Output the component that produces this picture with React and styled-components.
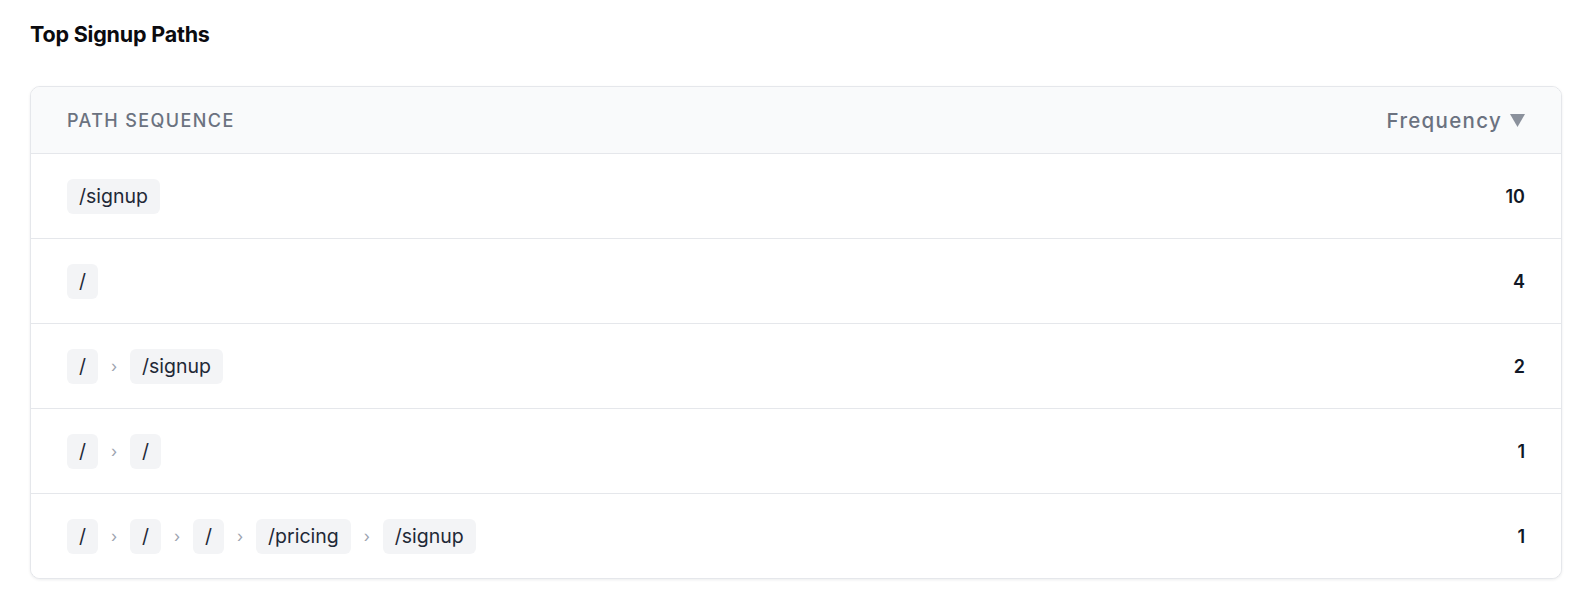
import React from 'react';
import styled, { createGlobalStyle } from 'styled-components';

const GlobalStyle = createGlobalStyle`
    html, body {
        margin: 0;
        padding: 0;
        background: #ffffff;
        font-family: Inter, "Liberation Sans", sans-serif;
        color: #111827;
    }
`;

const Page = styled.div`
    padding: 20px 32px 30px 30px;
`;

const Title = styled.h2`
    margin: 0 0 38px;
    font-size: 21.5px;
    line-height: 28px;
    font-weight: 700;
    color: #0b0b0f;
    letter-spacing: -0.2px;
`;

const Card = styled.div`
    border: 1px solid #e5e7eb;
    border-radius: 10px;
    background: #ffffff;
    box-shadow: 0 1px 3px rgba(17, 24, 39, 0.08);
    overflow: hidden;
`;

const Row = styled.div`
    display: flex;
    align-items: center;
    justify-content: space-between;
    height: ${p => (p.$head ? 66 : 84)}px;
    padding: 0 36px;
    background: ${p => (p.$head ? '#f9fafb' : '#ffffff')};
    border-bottom: 1px solid #e5e7eb;
    &:last-child {
        border-bottom: none;
    }
`;

const HeadLabel = styled.span`
    font-size: 18px;
    font-weight: 500;
    letter-spacing: 1.4px;
    text-transform: uppercase;
    color: #6b7280;
`;

const SortLabel = styled.span`
    display: flex;
    align-items: center;
    gap: 8px;
    font-size: 20.5px;
    font-weight: 500;
    letter-spacing: 1.3px;
    color: #6b7280;
`;

const Arrow = styled.svg`
    width: 15px;
    height: 13px;
    fill: #8b919c;
`;

const Sequence = styled.div`
    display: flex;
    align-items: center;
`;

const Chip = styled.span`
    display: inline-block;
    padding: 4px 12px;
    border-radius: 6px;
    background: #f3f4f6;
    font-size: 19.5px;
    line-height: 27px;
    color: #1f2937;
`;

const Sep = styled.span`
    width: 32px;
    text-align: center;
    font-size: 16px;
    color: #9ca3af;
`;

const Count = styled.span`
    font-size: 18px;
    font-weight: 600;
    color: #111827;
`;

const paths = [
    { steps: ['/signup'], count: 10 },
    { steps: ['/'], count: 4 },
    { steps: ['/', '/signup'], count: 2 },
    { steps: ['/', '/'], count: 1 },
    { steps: ['/', '/', '/', '/pricing', '/signup'], count: 1 },
];

export default function App() {
    return (
        <Page>
            <GlobalStyle />
            <Title>Top Signup Paths</Title>
            <Card>
                <Row $head>
                    <HeadLabel>Path Sequence</HeadLabel>
                    <SortLabel>
                        Frequency
                        <Arrow viewBox="0 0 15 13">
                            <path d="M0 0h15L7.5 13z" />
                        </Arrow>
                    </SortLabel>
                </Row>
                {paths.map((p, i) => (
                    <Row key={i}>
                        <Sequence>
                            {p.steps.map((s, j) => (
                                <React.Fragment key={j}>
                                    {j > 0 && <Sep>›</Sep>}
                                    <Chip>{s}</Chip>
                                </React.Fragment>
                            ))}
                        </Sequence>
                        <Count>{p.count}</Count>
                    </Row>
                ))}
            </Card>
        </Page>
    );
}
